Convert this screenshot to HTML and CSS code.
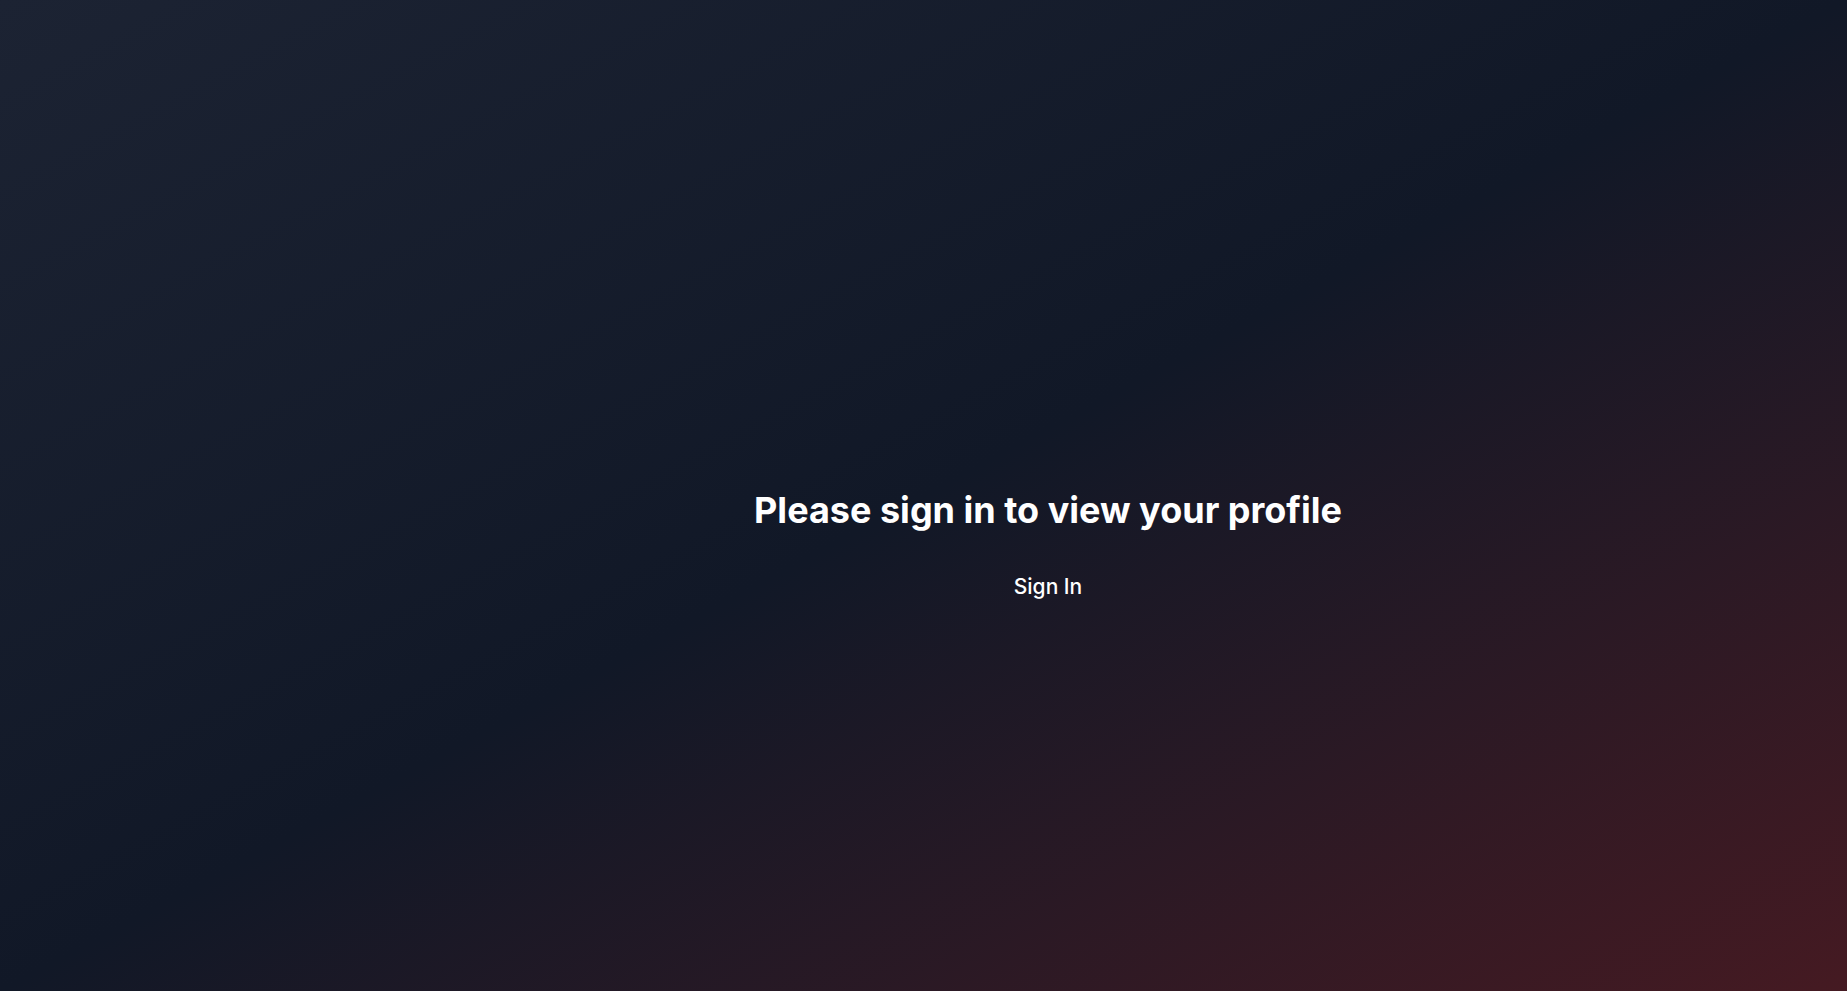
FILE: index.html
```html
<!DOCTYPE html>
<html lang="en">
<head>
<meta charset="utf-8">
<title>Profile</title>
<link rel="stylesheet" href="styles.css">
</head>
<body>
<div class="page">
  <aside class="sidebar"></aside>
  <main class="main">
    <h1 class="title">Please sign in to view your profile</h1>
    <button class="signin" type="button">Sign In</button>
  </main>
</div>
</body>
</html>
```
FILE: styles.css
```css
html, body {
  margin: 0;
  padding: 0;
  height: 100%;
}
body {
  font-family: Inter, "Noto Sans", "Liberation Sans", sans-serif;
  color: #fff;
  background: linear-gradient(to bottom right, #1c2333 0%, #111827 50%, #451a22 100%);
  min-height: 100vh;
}
.page {
  display: flex;
  min-height: 100vh;
}
.sidebar {
  width: 249px;
  flex-shrink: 0;
}
.main {
  flex: 1;
  display: flex;
  flex-direction: column;
  align-items: center;
  padding-top: 490px;
}
.title {
  margin: 0 0 32px;
  font-size: 36px;
  line-height: 40px;
  font-weight: 700;
  color: #ffffff;
}
.signin {
  background: transparent;
  border: 0;
  padding: 11px 16px;
  font-family: inherit;
  font-size: 21px;
  line-height: 28px;
  font-weight: 500;
  color: #ffffff;
  cursor: pointer;
}
```
